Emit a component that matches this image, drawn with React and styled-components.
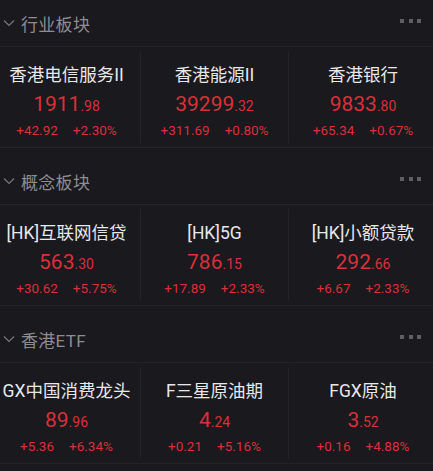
import React from "react";
import styled, { createGlobalStyle } from "styled-components";

const Global = createGlobalStyle`
  html, body { margin: 0; padding: 0; background: #1a191e; }
  body { font-family: Roboto, "Noto Sans CJK SC", sans-serif; overflow: hidden; }
`;

const Page = styled.div`
  width: 433px;
  height: 471px;
  overflow: hidden;
  background: #1a191e;
`;

const Section = styled.section`
  margin-bottom: 10px;
`;

const Header = styled.div`
  height: 46px;
  display: flex;
  align-items: center;
  padding: 0 12px 0 3px;
  box-sizing: border-box;
`;

const Title = styled.div`
  flex: 1;
  margin-left: 6px;
  font-size: 17px;
  color: #8d8c91;
  letter-spacing: 0.3px;
  font-family: Roboto, "Noto Sans CJK SC", sans-serif;
`;

const Dots = styled.div`
  display: flex;
  gap: 4.5px;
  margin-bottom: 4px;
  span {
    width: 4px;
    height: 4px;
    background: #5f5e63;
  }
`;

const Grid = styled.div`
  display: grid;
  grid-template-columns: repeat(3, 148px);
  margin-left: -7px;
  border-top: 1px solid #24232a;
  border-bottom: 1px solid #24232a;
  height: 102px;
  box-sizing: border-box;
`;

const Card = styled.div`
  display: flex;
  flex-direction: column;
  align-items: center;
  border-right: ${(p) => (p.$last ? "none" : "1px solid #24232a")};
  margin: 4px 0;
  padding-top: 12px;
`;

const Name = styled.div`
  font-size: 17.5px;
  line-height: 24px;
  color: #e8e8ea;
  white-space: nowrap;
`;

const Price = styled.div`
  margin-top: 4px;
  line-height: 26px;
  color: #d9303a;
  white-space: nowrap;
  b {
    font-weight: 400;
    font-size: 21px;
  }
  small {
    font-size: 14px;
  }
`;

const Changes = styled.div`
  margin-top: 2px;
  display: flex;
  gap: 15px;
  font-size: 13.5px;
  line-height: 18px;
  color: #d9303a;
`;

const Chevron = () => (
  <svg width="12" height="8" viewBox="0 0 12 8">
    <path d="M1 1.5 L6 6.5 L11 1.5" fill="none" stroke="#77767b" strokeWidth="1.2" />
  </svg>
);

const data = [
  {
    title: "行业板块",
    items: [
      ["香港电信服务II", "1911", ".98", "+42.92", "+2.30%"],
      ["香港能源II", "39299", ".32", "+311.69", "+0.80%"],
      ["香港银行", "9833", ".80", "+65.34", "+0.67%"],
    ],
  },
  {
    title: "概念板块",
    items: [
      ["[HK]互联网信贷", "563", ".30", "+30.62", "+5.75%"],
      ["[HK]5G", "786", ".15", "+17.89", "+2.33%"],
      ["[HK]小额贷款", "292", ".66", "+6.67", "+2.33%"],
    ],
  },
  {
    title: "香港ETF",
    items: [
      ["GX中国消费龙头", "89", ".96", "+5.36", "+6.34%"],
      ["F三星原油期", "4", ".24", "+0.21", "+5.16%"],
      ["FGX原油", "3", ".52", "+0.16", "+4.88%"],
    ],
  },
];

export default function App() {
  return (
    <Page>
      <Global />
      {data.map((s) => (
        <Section key={s.title}>
          <Header>
            <Chevron />
            <Title>{s.title}</Title>
            <Dots>
              <span />
              <span />
              <span />
            </Dots>
          </Header>
          <Grid>
            {s.items.map((it, i) => (
              <Card key={it[0]} $last={i === 2}>
                <Name>{it[0]}</Name>
                <Price>
                  <b>{it[1]}</b>
                  <small>{it[2]}</small>
                </Price>
                <Changes>
                  <span>{it[3]}</span>
                  <span>{it[4]}</span>
                </Changes>
              </Card>
            ))}
          </Grid>
        </Section>
      ))}
    </Page>
  );
}
